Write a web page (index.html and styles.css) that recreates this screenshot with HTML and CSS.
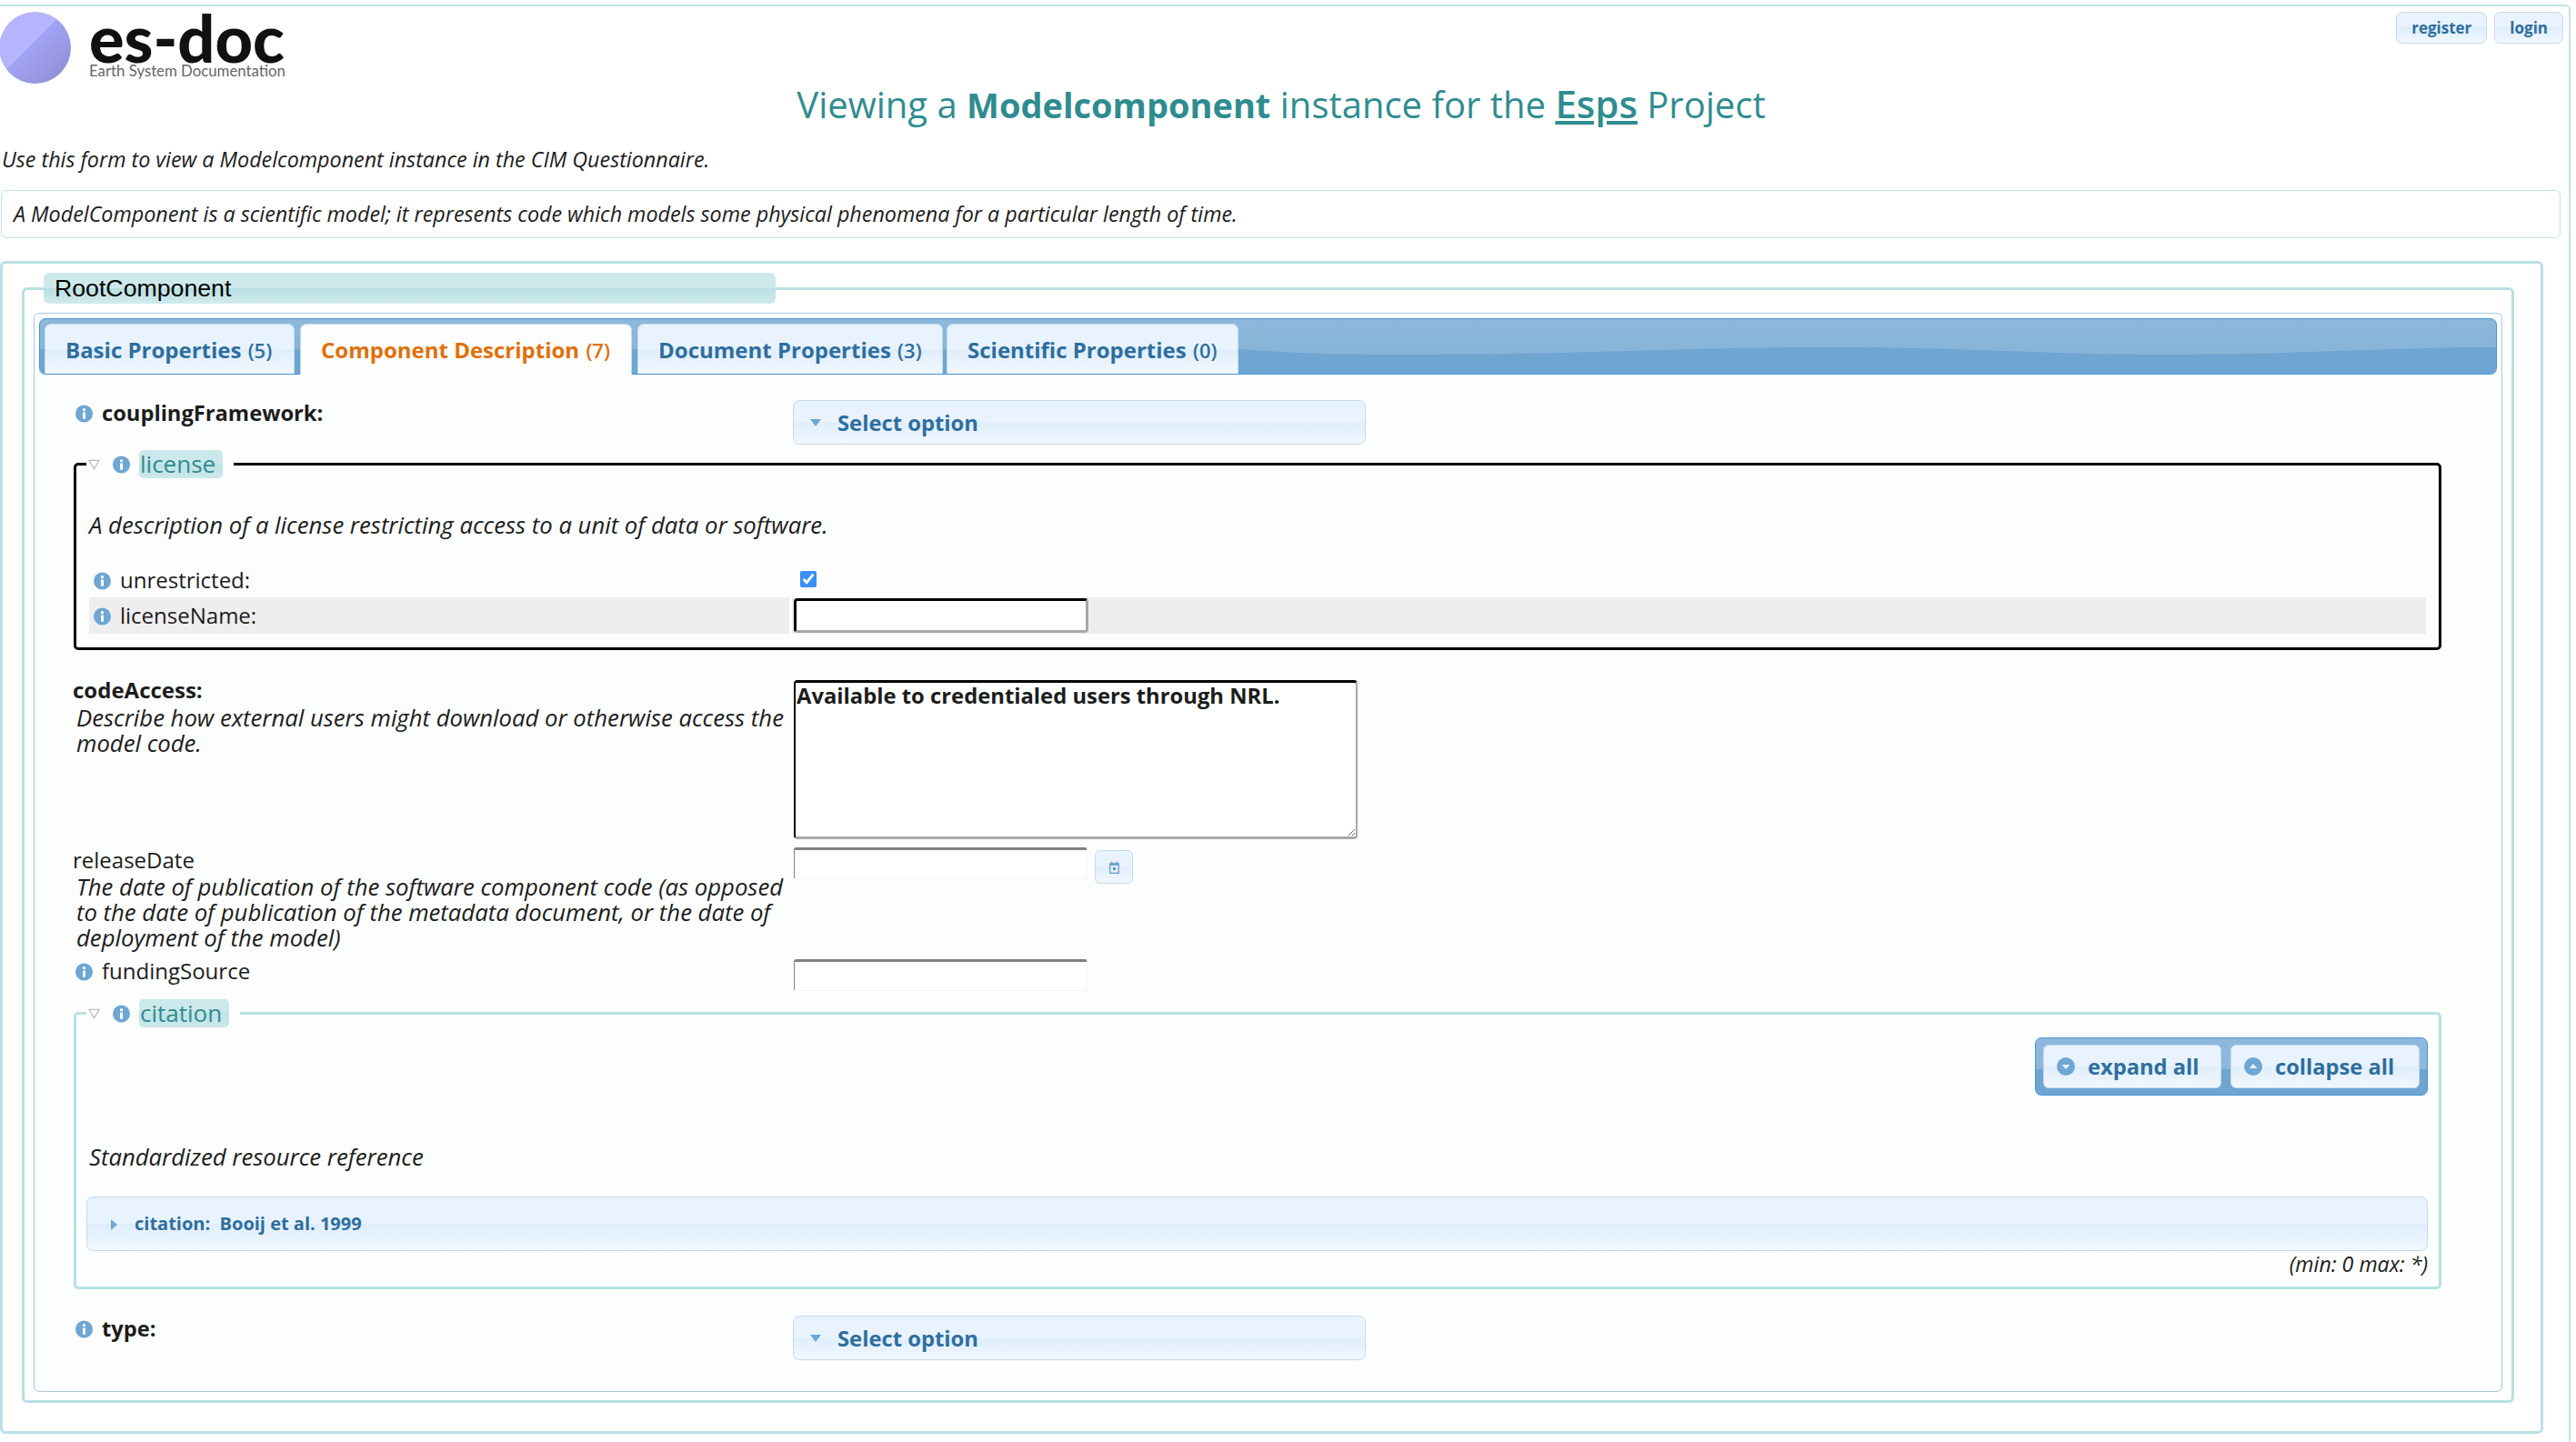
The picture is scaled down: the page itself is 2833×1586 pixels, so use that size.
FILE: index.html
```html
<!DOCTYPE html>
<html lang="en">
<head>
  <meta charset="UTF-8" />
  <title>Viewing a Modelcomponent instance</title>
  <link rel="stylesheet" href="styles.css">
</head>
<body>
  <svg class="defs" width="0" height="0" aria-hidden="true">
    <symbol id="info" viewBox="0 0 20 20">
      <circle cx="10" cy="10" r="10" fill="#6ea6d4" />
      <rect x="8.4" y="4" width="3.2" height="3" fill="#fff" />
      <rect x="8.4" y="8.5" width="3.2" height="7.5" fill="#fff" />
    </symbol>
    <symbol id="toggle" viewBox="0 0 14 12">
      <path d="M1 1 H13 L7 11 Z" fill="#fff" stroke="#bdbdbd" stroke-width="1.4" />
    </symbol>
  </svg>

  <div class="page">
    <div class="top">
      <div class="logo">
        <div class="logo-disc"></div>
        <div class="logo-text">
          <div class="logo-name">es-doc</div>
          <div class="logo-sub">Earth System Documentation</div>
        </div>
      </div>
      <div class="auth">
        <a class="auth-btn">register</a>
        <a class="auth-btn">login</a>
      </div>
    </div>

    <h1>Viewing a <b>Modelcomponent</b> instance for the <a class="project">Esps</a> Project</h1>
    <p class="intro">Use this form to view a Modelcomponent instance in the CIM Questionnaire.</p>
    <p class="blurb">A ModelComponent is a scientific model; it represents code which models some physical phenomena for a particular length of time.</p>

    <div class="form-box">
      <fieldset class="root">
        <legend>RootComponent</legend>

        <div class="tabs">
          <div class="tab-bar">
            <svg class="tab-wave" viewBox="0 0 2701 60" preserveAspectRatio="none" aria-hidden="true">
              <path d="M0 60 V33 L1320 33 C1400 39 1440 39 1515 39 C1700 39 1800 31 1965 31 C2120 31 2200 39 2338 39 C2480 39 2580 31 2701 31 V60 Z" fill="#6fa5d1" />
            </svg>
            <a class="tab tab-basic">Basic Properties <span>(5)</span></a>
            <a class="tab tab-comp active">Component Description <span>(7)</span></a>
            <a class="tab tab-doc">Document Properties <span>(3)</span></a>
            <a class="tab tab-sci">Scientific Properties <span>(0)</span></a>
          </div>

          <div class="panel">
            <div class="field field-coupling">
              <div class="label strong"><svg class="info"><use href="#info" /></svg>couplingFramework:</div>
              <div class="select"><i class="caret"></i>Select option</div>
            </div>

            <fieldset class="sub sub-license">
              <legend><svg class="toggle"><use href="#toggle" /></svg><svg class="info"><use href="#info" /></svg><span class="sub-title">license</span></legend>
              <p class="desc">A description of a license restricting access to a unit of data or software.</p>
              <div class="rows">
                <div class="row">
                  <div class="row-label"><svg class="info"><use href="#info" /></svg>unrestricted:</div>
                  <div class="row-value"><input class="check" type="checkbox" checked /></div>
                </div>
                <div class="row row-alt">
                  <div class="row-label"><svg class="info"><use href="#info" /></svg>licenseName:</div>
                  <div class="row-value"><input class="text focus" type="text" /></div>
                </div>
              </div>
            </fieldset>

            <div class="field field-access">
              <div>
                <div class="label strong-text">codeAccess:</div>
                <div class="help">Describe how external users might download or otherwise access the model code.</div>
              </div>
              <textarea class="area">Available to credentialed users through NRL.</textarea>
            </div>

            <div class="field field-release">
              <div>
                <div class="label">releaseDate</div>
                <div class="help">The date of publication of the software component code (as opposed to the date of publication of the metadata document, or the date of deployment of the model)</div>
              </div>
              <div class="date">
                <input class="text" type="text" />
                <a class="cal">
                  <svg viewBox="0 0 13 14" width="13" height="14">
                    <path d="M1 2 H3 V0.5 H4.5 V2 H8.5 V0.5 H10 V2 H12 V5 H1 Z" fill="#6ea6d4" />
                    <rect x="1.7" y="4" width="9.6" height="9.3" fill="none" stroke="#6ea6d4" stroke-width="1.4" />
                    <rect x="5.2" y="7" width="2.6" height="3" fill="#4f8fc4" />
                  </svg>
                </a>
              </div>
            </div>

            <div class="field field-funding">
              <div class="label"><svg class="info"><use href="#info" /></svg>fundingSource</div>
              <input class="text" type="text" />
            </div>

            <fieldset class="sub sub-citation">
              <legend><svg class="toggle"><use href="#toggle" /></svg><svg class="info"><use href="#info" /></svg><span class="sub-title">citation</span></legend>
              <div class="btn-set">
                <a class="btn"><svg class="btn-icon" viewBox="0 0 20 20"><circle cx="10" cy="10" r="10" fill="#6ea6d4" /><path d="M5.5 8 H14.5 L10 13 Z" fill="#e8f2fc" /></svg>expand all</a>
                <a class="btn"><svg class="btn-icon" viewBox="0 0 20 20"><circle cx="10" cy="10" r="10" fill="#6ea6d4" /><path d="M5.5 12 H14.5 L10 7 Z" fill="#e8f2fc" /></svg>collapse all</a>
              </div>
              <p class="desc desc-citation">Standardized resource reference</p>
              <div class="accordion"><i class="arrow"></i>citation:&nbsp; Booij et al. 1999</div>
              <div class="minmax">(min: 0 max: *)</div>
            </fieldset>

            <div class="field field-type">
              <div class="label strong"><svg class="info"><use href="#info" /></svg>type:</div>
              <div class="select"><i class="caret"></i>Select option</div>
            </div>
          </div>
        </div>
      </fieldset>
    </div>
  </div>
</body>
</html>
```

FILE: styles.css
```css
html, body {
  margin: 0;
  padding: 0;
  overflow: hidden;
}
body {
  font-family: "Open Sans", "Noto Sans", sans-serif;
  font-size: 23.3px;
  color: #1c1c1c;
  background-color: white;
}
.defs {
  position: absolute;
}
.page {
  height: 1581px;
  margin: 5px 6px 0 0;
  border-top: 2px solid #c3e2e5;
  border-right: 2px solid #c3e2e5;
  border-top-right-radius: 6px;
  box-sizing: border-box;
}

/* header */
.top {
  display: flex;
  justify-content: space-between;
  padding-top: 6px;
  height: 78px;
}
.logo {
  display: flex;
  gap: 20px;
}
.logo-disc {
  width: 79px;
  height: 79px;
  margin-left: -1px;
  border-radius: 50%;
  background: linear-gradient(135deg, #b5b5ff 0 45%, #a3a3f5 45%, #8b8bd0 100%);
}
.logo-name {
  font-family: Lato, sans-serif;
  font-weight: 900;
  font-size: 72px;
  line-height: 50px;
  color: #111;
  margin-top: 3px;
}
.logo-sub {
  font-family: Lato, sans-serif;
  font-size: 16.8px;
  line-height: 20px;
  color: #666;
  margin-top: 2px;
}
.auth {
  display: flex;
  gap: 8px;
  height: 35px;
  margin: 0 6px 0 0;
}
.auth-btn {
  display: block;
  padding: 0 16px;
  line-height: 33px;
  font-size: 17px;
  font-weight: 700;
  color: #2e6e9e;
  border: 1px solid #c5dbec;
  border-radius: 7px;
  background: linear-gradient(#e9f3fd 0 50%, #dfeefc 50%, #f1f7fe 100%);
}
h1 {
  margin: 0;
  font-size: 40px;
  line-height: 46px;
  font-weight: 400;
  text-align: center;
  color: #2f8c8f;
  padding-right: 7px;
}
h1 b {
  font-size: 38px;
}
.project {
  font-size: 42px;
  font-weight: 600;
  text-decoration: underline;
}
.intro {
  margin: 22px 0 0 2px;
  line-height: 30px;
  font-style: italic;
}
.blurb {
  margin: 19px 9px 0 1px;
  height: 53px;
  box-sizing: border-box;
  padding-left: 13px;
  line-height: 51px;
  font-style: italic;
  border: 1px solid #c3e2e5;
  border-radius: 6px;
}

/* outer boxes */
.form-box {
  margin: 25px 28px 0 0;
  padding: 10px 29px 31px 21px;
  border: 3px solid #b9e0e3;
  border-radius: 6px;
}
fieldset {
  margin: 0;
  min-width: 0;
}
.root {
  padding: 10px 10px 9px;
  border: 3px solid #b9e0e3;
  border-radius: 6px;
}
.root > legend {
  width: 805px;
  height: 34px;
  margin: 0 11px;
  padding: 0 0 0 12px;
  box-sizing: border-box;
  font-family: "Liberation Sans", sans-serif;
  font-size: 26.7px;
  line-height: 34px;
  color: black;
  border-radius: 6px;
  background: linear-gradient(#cfe9eb 0 50%, #b9e0e3 50%, #d0eaec 100%);
}

/* tabs */
.tabs {
  padding: 5px;
  border: 1px solid #a6c9e2;
  border-radius: 6px;
  background-color: #fcfdfd;
}
.tab-bar {
  position: relative;
  display: flex;
  align-items: flex-end;
  height: 60px;
  padding-left: 5px;
  border: 1px solid #4a94d4;
  border-radius: 7px;
  background: linear-gradient(#8db8db, #84b1d6);
}
.tab-wave {
  position: absolute;
  left: 0;
  top: 0;
  width: 100%;
  height: 100%;
  border-radius: 6px;
}
.tab {
  position: relative;
  display: block;
  box-sizing: border-box;
  height: 55px;
  padding-left: 22px;
  line-height: 55px;
  font-size: 24px;
  font-weight: 700;
  color: #2e6e9e;
  white-space: nowrap;
  border: 1px solid #c5dbec;
  border-bottom: 0;
  border-radius: 7px 7px 0 0;
  background: linear-gradient(#e9f3fd 0 50%, #dfeefc 50%, #f1f7fe 100%);
}
.tab span {
  font-size: 22px;
  font-weight: 600;
  margin-left: 1px;
}
.tab-basic { width: 275px; margin-right: 6px; }
.tab-comp { width: 365px; margin-right: 6px; }
.tab-doc { width: 336px; margin-right: 4px; }
.tab-sci { width: 321px; }
.tab.active {
  height: 56px;
  margin-bottom: -1px;
  color: #e17009;
  background: #fcfdfd;
}

/* form fields */
.panel {
  padding: 28px 61px 29px 37px;
}
.field {
  display: grid;
  grid-template-columns: 792px 1fr;
}
.label {
  font-size: 24px;
  line-height: 28px;
}
.strong {
  font-size: 23.7px;
  font-weight: 700;
}
.strong-text {
  font-weight: 700;
  margin-top: -3px;
}
.info {
  width: 19px;
  height: 20px;
  margin: 0 10px 0 3px;
  vertical-align: -2px;
}
.select {
  box-sizing: border-box;
  width: 630px;
  height: 49px;
  padding-left: 48px;
  position: relative;
  font-size: 23.8px;
  line-height: 49px;
  font-weight: 700;
  color: #2e6e9e;
  border: 1px solid #c5dbec;
  border-radius: 7px;
  background: linear-gradient(#e9f3fd 0 50%, #dfeefc 50%, #f1f7fe 100%);
}
.caret {
  position: absolute;
  left: 18px;
  top: 20px;
  border: 6px solid transparent;
  border-top: 8px solid #6ea6d4;
  border-bottom: 0;
}
.text {
  box-sizing: border-box;
  display: block;
  width: 323px;
  height: 35px;
  margin: 0;
  padding: 0 4px;
  background: white;
  border-style: solid;
  border-width: 3px 1px 1px 1px;
  border-color: #808080 #f5f5f5 #f5f5f5 #808080;
  border-radius: 3px;
}
.text.focus {
  width: 324px;
  height: 38px;
  border-width: 3px;
  border-color: black #a8a8a8 #a8a8a8 black;
  border-radius: 4px;
}
.help {
  width: 785px;
  margin: 3px 0 0 4px;
  font-size: 25.7px;
  line-height: 28px;
  font-style: italic;
}
.area {
  box-sizing: border-box;
  display: block;
  width: 620px;
  height: 175px;
  margin: 0 0 0 1px;
  padding: 0 1px;
  font: 700 23.8px/28px "Open Sans", "Noto Sans", sans-serif;
  color: #1c1c1c;
  background: white;
  border-style: solid;
  border-width: 3px 2px 3px 2px;
  border-color: black #a8a8a8 #a8a8a8 black;
  border-radius: 4px;
}
.field-access { margin-top: 33px; }
.field-release { margin-top: 9px; }
.field-release .help { margin-top: 2px; }
.field-funding { margin-top: 9px; }
.field-funding .label { margin-top: -1px; }
.field-type { margin-top: 29px; }
.date {
  display: flex;
  gap: 8px;
  align-items: flex-start;
}
.field .text, .date {
  margin-left: 1px;
}
.date .text { margin-left: 0; }
.cal {
  display: flex;
  align-items: center;
  justify-content: center;
  box-sizing: border-box;
  width: 42px;
  height: 37px;
  margin-top: 3px;
  border: 1px solid #c5dbec;
  border-radius: 6px;
  background: linear-gradient(#e9f3fd 0 50%, #dfeefc 50%, #f1f7fe 100%);
}

/* nested fieldsets */
.sub {
  padding: 0 14px 15px;
  margin: 6px 0 0 1px;
  border: 3px solid black;
  border-radius: 5px;
}
.sub legend {
  display: flex;
  align-items: center;
  height: 31px;
  margin: 0 0 0 -3px;
  padding: 0 12px 0 0;
  line-height: 31px;
}
.toggle {
  width: 13px;
  height: 12px;
  margin: 0 0 0 2px;
}
.sub legend .info {
  margin: 0 10px 0 14px;
}
.sub-title {
  display: block;
  padding: 0 8px 0 1px;
  font-size: 26px;
  color: #2f8c8f;
  border-radius: 5px;
  background: linear-gradient(#cce8ea 0 50%, #bfe3e6 50%, #cce8ea 100%);
}
.sub-citation {
  border-color: #b9e0e3;
  margin-top: 9px;
  padding: 0 12px 11px 11px;
}
.sub-citation legend {
  margin-left: 0;
}
.desc {
  margin: 38px 0 0;
  font-size: 25.7px;
  line-height: 28px;
  font-style: italic;
}
.rows {
  margin-top: 27px;
}
.row {
  display: grid;
  grid-template-columns: 770px 1fr;
  column-gap: 3px;
  height: 38px;
  background-color: #fdfdfd;
}
.row-label {
  font-size: 24px;
  line-height: 38px;
}
.row-label .info {
  margin: 0 10px 0 5px;
}
.row-alt {
  height: 40px;
  background: linear-gradient(90deg, #eee 0 770px, #fcfdfd 770px 773px, #eee 773px);
}
.row-alt .row-label { line-height: 40px; }
.row-value {
  padding-left: 2px;
}
.check {
  width: 18px;
  height: 18px;
  margin: 9px 0 0 7px;
  accent-color: #3b8ef5;
}
.row-alt .text { margin-top: 1px; }

/* citation */
.btn-set {
  display: flex;
  gap: 10px;
  width: fit-content;
  margin: 11px 0 0 auto;
  padding: 7px 8px;
  border: 1px solid #4a94d4;
  border-radius: 7px;
  background: linear-gradient(#8db8db 0 55%, #6fa5d1 55%);
}
.btn {
  display: flex;
  align-items: center;
  box-sizing: border-box;
  height: 48px;
  padding: 0 14px;
  font-size: 23.7px;
  font-weight: 700;
  color: #2e6e9e;
  border: 1px solid #c5dbec;
  border-radius: 6px;
  background: linear-gradient(#e9f3fd 0 50%, #dfeefc 50%, #f1f7fe 100%);
}
.btn:first-child { width: 196px; }
.btn:last-child { width: 208px; }
.btn-icon {
  width: 20px;
  height: 20px;
  margin-right: 14px;
}
.desc-citation {
  margin: 54px 0 0 3px;
}
.accordion {
  position: relative;
  box-sizing: border-box;
  height: 60px;
  margin-top: 29px;
  padding-left: 52px;
  line-height: 58px;
  font-size: 20px;
  font-weight: 700;
  color: #2e6e9e;
  border: 1px solid #c5dbec;
  border-radius: 7px;
  background: linear-gradient(#e9f3fd 0 50%, #dfeefc 50%, #f1f7fe 100%);
}
.arrow {
  position: absolute;
  left: 26px;
  top: 24px;
  border: 6px solid transparent;
  border-left: 7px solid #6ea6d4;
  border-right: 0;
}
.minmax {
  text-align: right;
  line-height: 28px;
  font-size: 23.2px;
  font-style: italic;
}
```
